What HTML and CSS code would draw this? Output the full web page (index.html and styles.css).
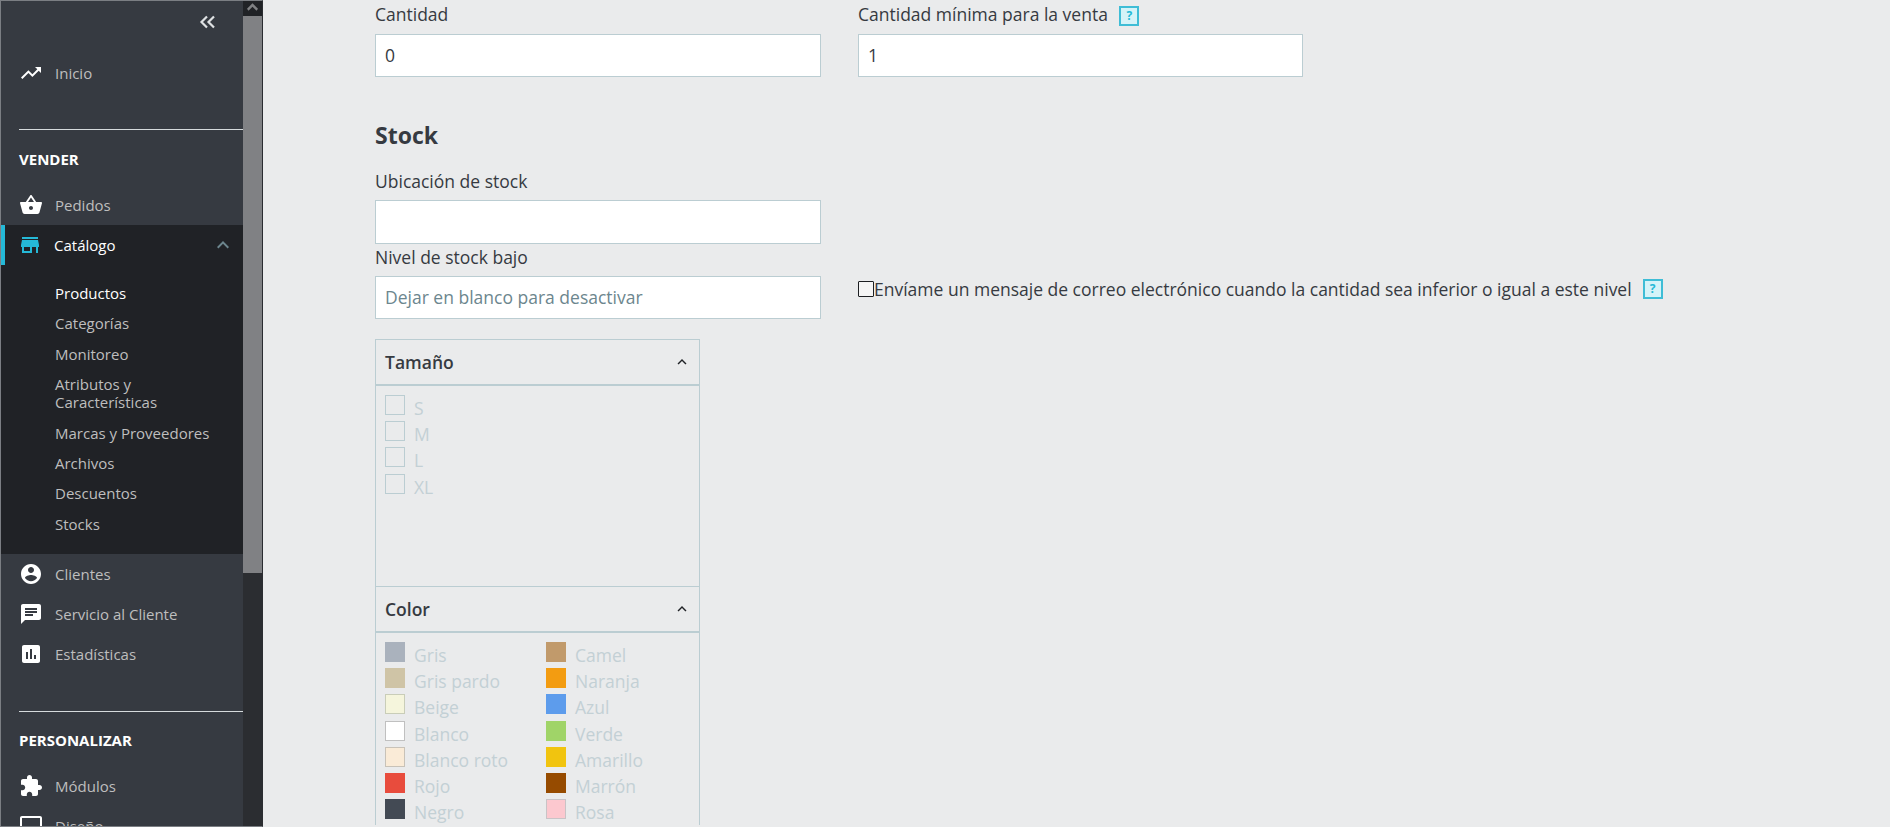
FILE: index.html
```html
<!DOCTYPE html>
<html lang="es">
<head>
<meta charset="utf-8">
<title>Stock</title>
<link rel="stylesheet" href="styles.css">
</head>
<body>
<div class="app">
  <aside class="sidebar">
    <nav class="nav">
      <div class="toggle">
        <svg class="toggle-icon" viewBox="0 0 18 14"><path d="M8 1.5 2.5 7 8 12.5M15 1.5 9.5 7l5.5 5.5"/></svg>
      </div>
      <a class="item"><svg class="icon" viewBox="0 0 24 24"><path d="M16 6l2.29 2.29-4.88 4.88-4-4L2 16.59 3.41 18l6-6 4 4 6.3-6.29L22 12V6z"/></svg><span>Inicio</span></a>
      <div class="rule"></div>
      <div class="section">VENDER</div>
      <a class="item"><svg class="icon" viewBox="0 0 24 24"><path d="M17.21 9l-4.38-6.56c-.19-.28-.51-.42-.83-.42-.32 0-.64.14-.83.43L6.79 9H2c-.55 0-1 .45-1 1 0 .09.01.18.04.27l2.54 9.27c.23.84 1 1.46 1.92 1.46h13c.92 0 1.69-.62 1.93-1.46l2.54-9.27L23 10c0-.55-.45-1-1-1h-4.79zM9 9l3-4.4L15 9H9zm3 8c-1.1 0-2-.9-2-2s.9-2 2-2 2 .9 2 2-.9 2-2 2z"/></svg><span>Pedidos</span></a>
      <div class="active-group">
        <a class="item item-active"><svg class="icon" viewBox="0 0 24 24"><path d="M20 4H4v2h16V4zm1 10v-2l-1-5H4l-1 5v2h1v6h10v-6h4v6h2v-6h1zm-9 4H6v-4h6v4z"/></svg><span>Catálogo</span><svg class="caret" viewBox="0 0 24 24"><path d="M12 8l-6 6 1.41 1.41L12 10.83l4.59 4.58L18 14z"/></svg></a>
        <ul class="sub">
          <li class="sub-item sub-current">Productos</li>
          <li class="sub-item">Categorías</li>
          <li class="sub-item">Monitoreo</li>
          <li class="sub-item sub-double">Atributos y Características</li>
          <li class="sub-item">Marcas y Proveedores</li>
          <li class="sub-item">Archivos</li>
          <li class="sub-item">Descuentos</li>
          <li class="sub-item">Stocks</li>
        </ul>
      </div>
      <a class="item"><svg class="icon" viewBox="0 0 24 24"><path d="M12 2C6.48 2 2 6.48 2 12s4.48 10 10 10 10-4.48 10-10S17.52 2 12 2zm0 3c1.66 0 3 1.34 3 3s-1.34 3-3 3-3-1.34-3-3 1.34-3 3-3zm0 14.2c-2.5 0-4.71-1.28-6-3.22.03-1.99 4-3.08 6-3.08 1.99 0 5.97 1.09 6 3.08-1.29 1.94-3.5 3.22-6 3.22z"/></svg><span>Clientes</span></a>
      <a class="item"><svg class="icon" viewBox="0 0 24 24"><path d="M20 2H4c-1.1 0-1.99.9-1.99 2L2 22l4-4h14c1.1 0 2-.9 2-2V4c0-1.1-.9-2-2-2zM6 9h12v2H6V9zm8 5H6v-2h8v2zm4-6H6V6h12v2z"/></svg><span>Servicio al Cliente</span></a>
      <a class="item"><svg class="icon" viewBox="0 0 24 24"><path d="M19 3H5c-1.1 0-2 .9-2 2v14c0 1.1.9 2 2 2h14c1.1 0 2-.9 2-2V5c0-1.1-.9-2-2-2zM9 17H7v-7h2v7zm4 0h-2V7h2v10zm4 0h-2v-4h2v4z"/></svg><span>Estadísticas</span></a>
      <div class="rule rule-second"></div>
      <div class="section">PERSONALIZAR</div>
      <a class="item"><svg class="icon" viewBox="0 0 24 24"><path d="M20.5 11H19V7c0-1.1-.9-2-2-2h-4V3.5C13 2.12 11.88 1 10.5 1S8 2.12 8 3.5V5H4c-1.1 0-1.99.9-1.99 2v3.8H3.5c1.49 0 2.7 1.21 2.7 2.7s-1.21 2.7-2.7 2.7H2V20c0 1.1.9 2 2 2h3.8v-1.5c0-1.49 1.21-2.7 2.7-2.7 1.49 0 2.7 1.21 2.7 2.7V22H17c1.1 0 2-.9 2-2v-4h1.5c1.38 0 2.5-1.12 2.5-2.5S21.88 11 20.5 11z"/></svg><span>Módulos</span></a>
      <a class="item"><svg class="icon" viewBox="0 0 24 24"><path d="M21 2H3c-1.1 0-2 .9-2 2v12c0 1.1.9 2 2 2h7v2H8v2h8v-2h-2v-2h7c1.1 0 2-.9 2-2V4c0-1.1-.9-2-2-2zm0 14H3V4h18v12z"/></svg><span>Diseño</span></a>
    </nav>
    <div class="scrollbar">
      <div class="scroll-btn"><svg viewBox="0 0 12 8"><path d="M6 0 12 6 10.4 8 6 3.6 1.6 8 0 6z"/></svg></div>
      <div class="scroll-thumb"></div>
    </div>
  </aside>

  <main class="main">
    <div class="row row-top">
      <div class="field">
        <label class="label">Cantidad</label>
        <input class="input" value="0">
      </div>
      <div class="field">
        <label class="label">Cantidad mínima para la venta <span class="help help-top">?</span></label>
        <input class="input" value="1">
      </div>
    </div>

    <h2 class="heading">Stock</h2>

    <div class="field field-single">
      <label class="label">Ubicación de stock</label>
      <input class="input">
    </div>

    <div class="row row-low">
      <div class="field">
        <label class="label">Nivel de stock bajo</label>
        <input class="input" placeholder="Dejar en blanco para desactivar">
      </div>
      <div class="notify">
        <span class="check"></span><span>Envíame un mensaje de correo electrónico cuando la cantidad sea inferior o igual a este nivel</span><span class="help">?</span>
      </div>
    </div>

    <section class="attrs">
      <div class="attr-head">Tamaño<svg class="attr-caret" viewBox="0 0 24 24"><path d="M12 8l-6 6 1.41 1.41L12 10.83l4.59 4.58L18 14z"/></svg></div>
      <div class="attr-body attr-body-size">
        <div class="opt"><span class="box"></span>S</div>
        <div class="opt"><span class="box"></span>M</div>
        <div class="opt"><span class="box"></span>L</div>
        <div class="opt"><span class="box"></span>XL</div>
      </div>
      <div class="attr-head attr-head-next">Color<svg class="attr-caret" viewBox="0 0 24 24"><path d="M12 8l-6 6 1.41 1.41L12 10.83l4.59 4.58L18 14z"/></svg></div>
      <div class="attr-body attr-grid">
        <div class="opt"><span class="box c-gris"></span>Gris</div>
        <div class="opt"><span class="box c-camel"></span>Camel</div>
        <div class="opt"><span class="box c-pardo"></span>Gris pardo</div>
        <div class="opt"><span class="box c-naranja"></span>Naranja</div>
        <div class="opt"><span class="box c-beige"></span>Beige</div>
        <div class="opt"><span class="box c-azul"></span>Azul</div>
        <div class="opt"><span class="box c-blanco"></span>Blanco</div>
        <div class="opt"><span class="box c-verde"></span>Verde</div>
        <div class="opt"><span class="box c-roto"></span>Blanco roto</div>
        <div class="opt"><span class="box c-amarillo"></span>Amarillo</div>
        <div class="opt"><span class="box c-rojo"></span>Rojo</div>
        <div class="opt"><span class="box c-marron"></span>Marrón</div>
        <div class="opt"><span class="box c-negro"></span>Negro</div>
        <div class="opt"><span class="box c-rosa"></span>Rosa</div>
      </div>
    </section>
  </main>
</div>
</body>
</html>
```

FILE: styles.css
```css
* { box-sizing: border-box; }
html, body { margin: 0; height: 100%; overflow: hidden; }
body { font-family: "Open Sans", sans-serif; color: #363a41; background: #eaebec; }

.app { display: flex; height: 827px; overflow: hidden; }

/* Sidebar */
.sidebar { flex: 0 0 263px; display: flex; height: 827px; overflow: hidden; background: #363a41; border-left: 1px solid #7b7e83; border-right: 1px solid #2b2d31; border-top: 1px solid #7b7e83; border-bottom: 1px solid #7b7e83; }
.nav { flex: 0 0 242px; display: flex; flex-direction: column; overflow: hidden; font-size: 15px; color: #bebebe; margin-top: -1px; }
.toggle { flex: 0 0 44px; margin-bottom: 9px; display: flex; justify-content: flex-end; align-items: center; padding-right: 26px; }
.toggle-icon { width: 18px; height: 14px; fill: none; stroke: #dfe1e3; stroke-width: 2.2; }
.item { flex: 0 0 40px; display: flex; align-items: center; padding-left: 18px; gap: 12px; }
.icon { width: 24px; height: 24px; fill: #fff; flex: none; }
.rule { flex: 0 0 1px; margin: 36px 0 19px 18px; background: #d5dadc; }
.rule-second { margin-top: 37px; margin-bottom: 18px; }
.section { flex: 0 0 20px; margin-bottom: 16px; padding-left: 18px; line-height: 20px; color: #fff; font-weight: 700; font-size: 15px; }
.active-group { flex: none; background: #202226; padding-bottom: 15px; }
.item-active { height: 40px; padding-left: 17px; color: #fff; position: relative; }
.item-active::before { content: ""; position: absolute; left: -1px; top: 0; width: 5px; height: 40px; background: #25b9d7; }
.item-active .icon { fill: #25b9d7; }
.caret { width: 24px; height: 24px; fill: #6c868e; margin-left: auto; margin-right: 8px; }
.sub { list-style: none; margin: 0; padding: 13px 0 0 54px; }
.sub-item { height: 30.35px; line-height: 30.35px; }
.sub-current { color: #fff; }
.sub-double { height: 48.5px; line-height: 18px; padding: 6px 20px 0 0; }

.scrollbar { flex: 0 0 19px; background: #2b2d31; }
.scroll-btn { height: 15px; background: #202226; display: flex; justify-content: center; padding-top: 2px; }
.scroll-btn svg { width: 11px; height: 8px; fill: #808184; }
.scroll-thumb { height: 557px; background: #808184; }

/* Main */
.main { flex: 1; min-width: 0; padding: 0 0 0 112px; height: 827px; overflow: hidden; }
.row { display: grid; grid-template-columns: 446px 445px; column-gap: 37px; }
.field { display: flex; flex-direction: column; }
.field-single { width: 446px; }
.label { font-size: 17.5px; line-height: 28px; display: flex; align-items: center; height: 28px; white-space: pre; }
.row-top .label { height: 34px; padding-bottom: 6px; }
.input { width: 100%; height: 43px; border: 1px solid #bbcdd2; background: #fff; padding: 0 9px 2px; font: 17.5px "Open Sans", sans-serif; color: #363a41; border-radius: 0; outline: 0; }
.input::placeholder { color: #6c868e; opacity: 1; }
.heading { margin: 41px 0 0; font-size: 23px; line-height: 34px; font-weight: 700; color: #363a41; }
.heading + .field-single { margin-top: 16px; }
.heading + .field-single .label { height: 32px; padding-bottom: 6px; }
.field-single .input { height: 44px; }
.row-low .label { height: 32px; padding-bottom: 6px; }
.row-low .input { height: 43px; }
.help { display: inline-flex; justify-content: center; align-items: center; flex: none; width: 20px; height: 20px; margin-left: 11px; border: 2px solid #3fbdd6; background: #d5f3f8; color: #25b9d7; font-size: 12px; font-weight: 700; line-height: 1; }
.help-top { margin-left: 7px; position: relative; top: 2px; }
.notify { display: flex; align-items: center; align-self: start; margin-top: 34px; font-size: 17.5px; line-height: 22px; white-space: nowrap; }
.check { width: 16px; height: 16px; border: 1px solid #1d1f22; background: #f5f5f5; flex: none; border-radius: 1px; }

/* Attribute panel */
.attrs { width: 325px; margin-top: 20px; border: 1px solid #bbcdd2; border-bottom: 0; }
.attr-head { height: 46px; display: flex; align-items: center; justify-content: space-between; padding: 0 8px 0 9px; font-size: 17.5px; font-weight: 600; border-bottom: 2px solid #bbcdd2; }
.attr-head-next { height: 47px; border-top: 1px solid #bbcdd2; }
.attr-caret { width: 18px; height: 18px; fill: #202226; }
.attr-body { padding: 9px 0 0 9px; }
.attr-body-size { height: 200px; }
.attr-grid { display: grid; grid-template-columns: 161px 161px; }
.opt { height: 26.2px; display: flex; align-items: flex-start; gap: 9px; font-size: 17.5px; line-height: 26px; color: #c3d0d5; white-space: nowrap; }
.box { width: 20px; height: 20px; flex: none; border: 1px solid #bbcdd2; }
.c-gris { background: #aab2bd; border-color: #aab2bd; }
.c-pardo { background: #cfc4a6; border-color: #cfc4a6; }
.c-beige { background: #f5f5dc; border-color: #c9cdb8; }
.c-blanco { background: #fff; border-color: #c0c0c0; }
.c-roto { background: #faebd7; border-color: #c8c2b8; }
.c-rojo { background: #e84c3d; border-color: #e84c3d; }
.c-negro { background: #434a54; border-color: #434a54; }
.c-camel { background: #c19a6b; border-color: #c19a6b; }
.c-naranja { background: #f39c11; border-color: #f39c11; }
.c-azul { background: #5d9cec; border-color: #5d9cec; }
.c-verde { background: #a0d468; border-color: #a0d468; }
.c-amarillo { background: #f1c40f; border-color: #f1c40f; }
.c-marron { background: #964b00; border-color: #964b00; }
.c-rosa { background: #fcc8cf; border-color: #c9c3c6; }
```
